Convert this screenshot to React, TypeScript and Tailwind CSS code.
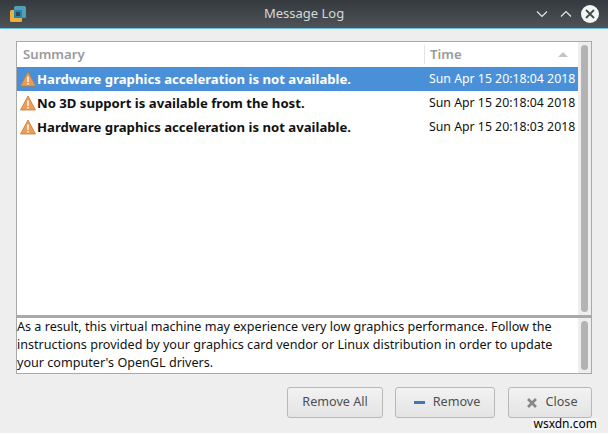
const rows = [
  { summary: "Hardware graphics acceleration is not available.", time: "Sun Apr 15 20:18:04 2018", selected: true },
  { summary: "No 3D support is available from the host.", time: "Sun Apr 15 20:18:04 2018", selected: false },
  { summary: "Hardware graphics acceleration is not available.", time: "Sun Apr 15 20:18:03 2018", selected: false },
];

function AppLogo() {
  return (
    <svg viewBox="0 0 18 18" className="h-[18px] w-[18px]">
      <rect x="5" y="1" width="12" height="12" rx="1.5" fill="#4f9fb5" />
      <rect x="1" y="5" width="12" height="12" rx="1.5" fill="#eeb03a" />
      <rect x="5" y="5" width="8" height="8" fill="#1e86b8" />
      <rect x="7" y="7" width="4" height="4" fill="#3d4347" />
    </svg>
  );
}

function Warning() {
  return (
    <svg viewBox="0 0 16 16" className="h-[16px] w-[16px] shrink-0">
      <path d="M8 1 15.5 15H.5z" fill="#eb9d58" stroke="#c97a3a" strokeWidth="0.8" strokeLinejoin="round" />
      <rect x="7.2" y="5.5" width="1.7" height="5.5" fill="#fff3e6" />
      <rect x="7.2" y="12" width="1.7" height="1.7" fill="#fff3e6" />
    </svg>
  );
}

function Scrollbar() {
  return (
    <div className="flex w-[13px] shrink-0 bg-[#eeeeee] px-[3px] py-[3px]">
      <div className="w-full rounded-full bg-[#b3b3b3]" />
    </div>
  );
}

function Button({ icon, label, className }: { icon?: React.ReactNode; label: string; className: string }) {
  return (
    <button
      type="button"
      className={`flex h-[31px] items-center justify-center gap-[8px] rounded-[3px] border border-[#b8b8b8] bg-gradient-to-b from-[#f2f2f2] to-[#e4e4e4] text-[12.6px] text-[#4b4f52] ${className}`}
    >
      {icon}
      {label}
    </button>
  );
}

export default function App() {
  return (
    <div className="flex h-[433px] w-[608px] flex-col overflow-hidden bg-[#eeeeee] font-['Noto_Sans',sans-serif]">
      <div className="grid h-[29px] shrink-0 grid-cols-[1fr_auto_1fr] items-center border-b border-[#6ec1e8] bg-gradient-to-b from-[#353a3e] to-[#4d5358] pl-[9px] pr-[9px]">
        <AppLogo />
        <div className="text-center text-[13px] text-[#d5d8da]">Message Log</div>
        <div className="flex items-center justify-end">
          <svg viewBox="0 0 12 8" className="mr-[12px] h-[8px] w-[12px]" fill="none" stroke="#e4e6e7" strokeWidth="1.2">
            <path d="M1 1.5 6 6.5 11 1.5" />
          </svg>
          <svg viewBox="0 0 12 8" className="mr-[9px] h-[8px] w-[12px]" fill="none" stroke="#e4e6e7" strokeWidth="1.2">
            <path d="M1 6.5 6 1.5 11 6.5" />
          </svg>
          <svg viewBox="0 0 18 18" className="h-[18px] w-[18px]">
            <circle cx="9" cy="9" r="9" fill="#f4f5f5" />
            <path d="M5 5 13 13M13 5 5 13" stroke="#44494d" strokeWidth="1.8" />
          </svg>
        </div>
      </div>

      <div className="flex flex-1 flex-col pl-[16px] pr-[16px] pt-[12px]">
        <div className="flex h-[333px] flex-col border border-[#a9a9a9] bg-white">
          <div className="flex min-h-0 flex-1">
            <div className="min-w-0 flex-1">
              <div className="flex h-[25px] items-center text-[13.2px] font-semibold text-[#9a9a9a]">
                <div className="flex-1 pl-[6px]">Summary</div>
                <div className="flex w-[154px] items-center justify-between border-l border-[#e4e4e4] pl-[5px] pr-[10px]">
                  Time
                  <span className="h-0 w-0 border-x-[5px] border-b-[5px] border-x-transparent border-b-[#c4c4c4]" />
                </div>
              </div>
              {rows.map((row, i) => (
                <div
                  key={i}
                  className={`flex h-[24px] items-center pt-[1px] ${row.selected ? "bg-[#4a90d9] text-white" : "text-[#111111]"}`}
                >
                  <div className="flex flex-1 items-center gap-[1px] pl-[3px] text-[13.15px] font-bold">
                    <Warning />
                    {row.summary}
                  </div>
                  <div className="w-[154px] pl-[5px] text-[12.3px] whitespace-nowrap">{row.time}</div>
                </div>
              ))}
            </div>
            <Scrollbar />
          </div>
          <div className="h-[3px] shrink-0 bg-[#a9a9a9]" />
          <div className="flex h-[55px] shrink-0">
            <p className="min-w-0 flex-1 text-[12.6px] leading-[18px] text-[#111111]">
              As a result, this virtual machine may experience very low graphics performance. Follow the instructions provided by your graphics card vendor or Linux distribution in order to update your computer's OpenGL drivers.
            </p>
            <Scrollbar />
          </div>
        </div>

        <div className="mt-[13px] flex justify-end">
          <Button label="Remove All" className="mr-[12px] w-[96px]" />
          <Button
            label="Remove"
            className="mr-[13px] w-[100px] pl-[4px]"
            icon={<span className="h-[3px] w-[11px] bg-[#3f78b5]" />}
          />
          <Button
            label="Close"
            className="w-[84px] pl-[3px]"
            icon={
              <svg viewBox="0 0 12 12" className="h-[12px] w-[12px]">
                <path d="M2 2 10 10M10 2 2 10" stroke="#85888a" strokeWidth="2.6" />
              </svg>
            }
          />
        </div>
      </div>

      <div className="mb-[4px] mr-[10px] self-end bg-[#f4f4f4] px-[1px] text-[12px] leading-[12px] text-black">
        wsxdn.com
      </div>
    </div>
  );
}
